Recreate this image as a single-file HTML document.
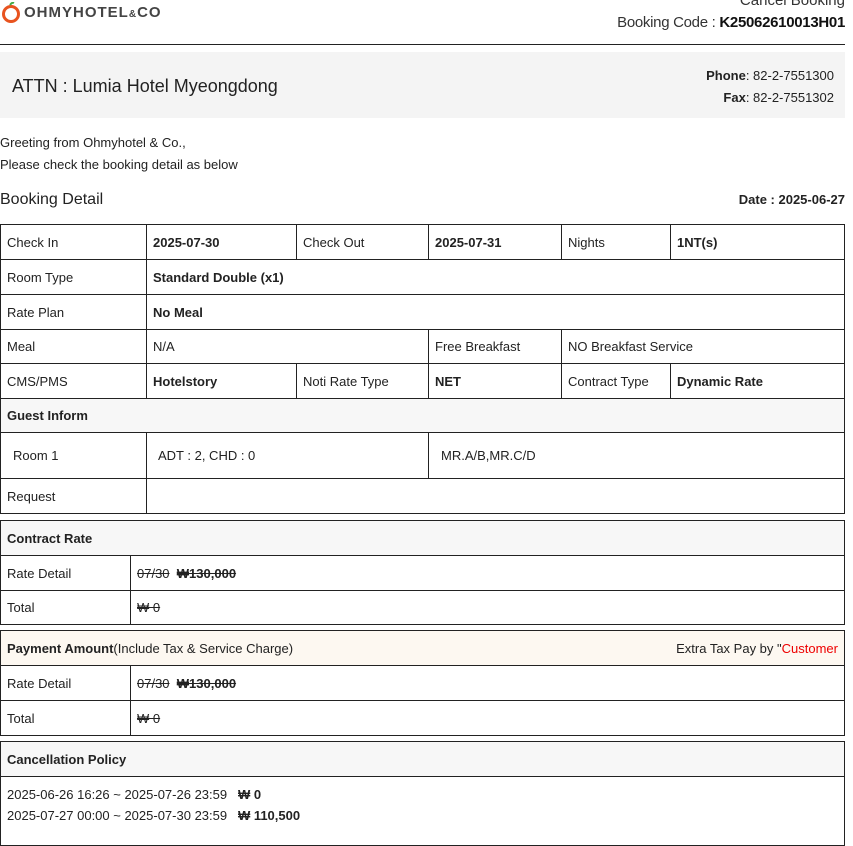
<!DOCTYPE html>
<html><head><meta charset="utf-8"><style>
body{margin:0;width:853px;height:827px;overflow:hidden;background:#fff;font-family:"Liberation Sans",sans-serif;color:#222;font-size:13px;position:relative}
.c{position:absolute;box-sizing:border-box;border:1px solid #222;display:flex;align-items:center;padding-left:6px;white-space:nowrap;background:#fff}
.g{background:#f7f7f7}
b{font-weight:bold}
.a{position:absolute;white-space:nowrap}
s{text-decoration:line-through}
</style></head><body>
<svg class="a" style="left:1px;top:2px" width="20" height="22" viewBox="0 0 20 22"><circle cx="10" cy="12" r="7.5" fill="none" stroke="#e8531f" stroke-width="3"/><path d="M9 3 q2-3 4-2" stroke="#4a4" stroke-width="2" fill="none"/></svg>
<div class="a" style="left:24px;top:4px;font-size:15px;font-weight:bold;color:#444;letter-spacing:1px">OHMYHOTEL<span style="font-size:10px">&amp;</span>CO</div>
<div class="a" style="right:8px;top:-8px;font-size:15px;color:#333">Cancel Booking</div>
<div class="a" style="right:8px;top:14px;font-size:15px;color:#333;letter-spacing:-0.3px">Booking Code : <b style="color:#111">K25062610013H01</b></div>
<div class="a" style="left:0;top:44px;width:845px;height:1px;background:#222"></div>
<div class="a" style="left:0;top:52px;width:845px;height:66px;background:#f4f4f4"></div>
<div class="a" style="left:12px;top:76px;font-size:18px;color:#222">ATTN : Lumia Hotel Myeongdong</div>
<div class="a" style="right:19px;top:68px"><b>Phone</b>: 82-2-7551300</div>
<div class="a" style="right:19px;top:90px"><b>Fax</b>: 82-2-7551302</div>
<div class="a" style="left:0;top:135px">Greeting from Ohmyhotel &amp; Co.,</div>
<div class="a" style="left:0;top:157px">Please check the booking detail as below</div>
<div class="a" style="left:0;top:191px;font-size:16px">Booking Detail</div>
<div class="a" style="right:8px;top:192px"><b>Date : 2025-06-27</b></div>

<div class="c" style="left:0;top:224px;width:147px;height:36px">Check In</div>
<div class="c" style="left:146px;top:224px;width:151px;height:36px"><b>2025-07-30</b></div>
<div class="c" style="left:296px;top:224px;width:133px;height:36px">Check Out</div>
<div class="c" style="left:428px;top:224px;width:134px;height:36px"><b>2025-07-31</b></div>
<div class="c" style="left:561px;top:224px;width:110px;height:36px">Nights</div>
<div class="c" style="left:670px;top:224px;width:175px;height:36px"><b>1NT(s)</b></div>

<div class="c" style="left:0;top:259px;width:147px;height:36px">Room Type</div>
<div class="c" style="left:146px;top:259px;width:699px;height:36px"><b>Standard Double (x1)</b></div>
<div class="c" style="left:0;top:294px;width:147px;height:36px">Rate Plan</div>
<div class="c" style="left:146px;top:294px;width:699px;height:36px"><b>No Meal</b></div>

<div class="c" style="left:0;top:329px;width:147px;height:35px">Meal</div>
<div class="c" style="left:146px;top:329px;width:283px;height:35px">N/A</div>
<div class="c" style="left:428px;top:329px;width:134px;height:35px">Free Breakfast</div>
<div class="c" style="left:561px;top:329px;width:284px;height:35px">NO Breakfast Service</div>

<div class="c" style="left:0;top:363px;width:147px;height:36px">CMS/PMS</div>
<div class="c" style="left:146px;top:363px;width:151px;height:36px"><b>Hotelstory</b></div>
<div class="c" style="left:296px;top:363px;width:133px;height:36px">Noti Rate Type</div>
<div class="c" style="left:428px;top:363px;width:134px;height:36px"><b>NET</b></div>
<div class="c" style="left:561px;top:363px;width:110px;height:36px">Contract Type</div>
<div class="c" style="left:670px;top:363px;width:175px;height:36px"><b>Dynamic Rate</b></div>

<div class="c g" style="left:0;top:398px;width:845px;height:35px"><b>Guest Inform</b></div>
<div class="c" style="left:0;top:432px;width:147px;height:47px;padding-left:12px">Room 1</div>
<div class="c" style="left:146px;top:432px;width:283px;height:47px;padding-left:11px">ADT : 2, CHD : 0</div>
<div class="c" style="left:428px;top:432px;width:417px;height:47px;padding-left:12px">MR.A/B,MR.C/D</div>
<div class="c" style="left:0;top:478px;width:147px;height:36px">Request</div>
<div class="c" style="left:146px;top:478px;width:699px;height:36px"></div>

<div class="c g" style="left:0;top:520px;width:845px;height:36px"><b>Contract Rate</b></div>
<div class="c" style="left:0;top:555px;width:131px;height:36px">Rate Detail</div>
<div class="c" style="left:130px;top:555px;width:715px;height:36px"><s>07/30</s>&nbsp;&nbsp;<b><s>₩130,000</s></b></div>
<div class="c" style="left:0;top:590px;width:131px;height:35px">Total</div>
<div class="c" style="left:130px;top:590px;width:715px;height:35px"><s>₩ 0</s></div>

<div class="c" style="left:0;top:630px;width:845px;height:36px;background:#fdf8f1;justify-content:space-between;padding-right:6px"><span><b>Payment Amount</b>(Include Tax &amp; Service Charge)</span><span>Extra Tax Pay by "<span style="color:#e00">Customer</span></span></div>
<div class="c" style="left:0;top:665px;width:131px;height:36px">Rate Detail</div>
<div class="c" style="left:130px;top:665px;width:715px;height:36px"><s>07/30</s>&nbsp;&nbsp;<b><s>₩130,000</s></b></div>
<div class="c" style="left:0;top:700px;width:131px;height:36px">Total</div>
<div class="c" style="left:130px;top:700px;width:715px;height:36px"><s>₩ 0</s></div>

<div class="c g" style="left:0;top:741px;width:845px;height:36px"><b>Cancellation Policy</b></div>
<div class="c" style="left:0;top:776px;width:845px;height:70px;align-items:flex-start;padding-top:7px;line-height:21px;display:block">2025-06-26 16:26 ~ 2025-07-26 23:59&nbsp;&nbsp;&nbsp;<b>₩ 0</b><br>2025-07-27 00:00 ~ 2025-07-30 23:59&nbsp;&nbsp;&nbsp;<b>₩ 110,500</b></div>
</body></html>
